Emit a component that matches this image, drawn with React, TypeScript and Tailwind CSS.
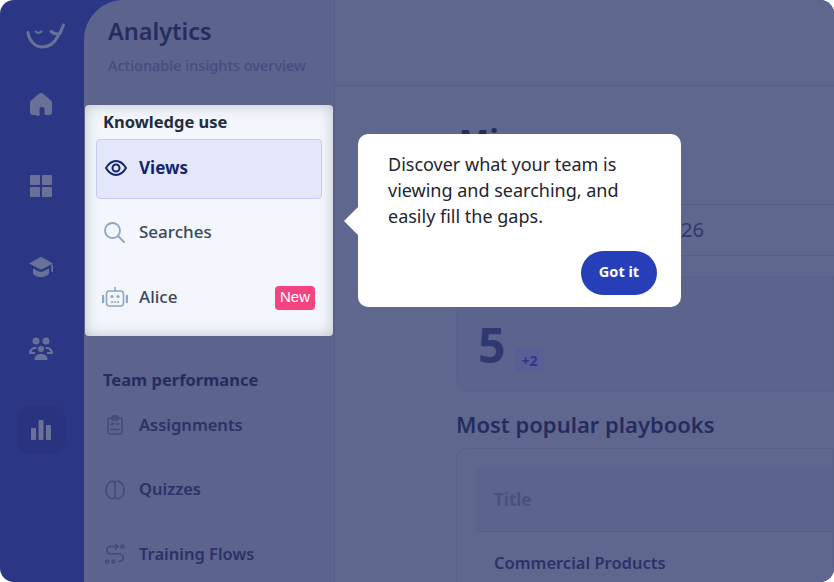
const font = { fontFamily: "'Noto Sans', sans-serif" };

const Logo = () => (
  <svg width="40" height="26" viewBox="0 0 40 26" fill="none" stroke="#6a7199" strokeWidth="3" strokeLinecap="round">
    <path d="M2 9.500c1 8 7 14.500 14 14.500 8 0 13-5 16-11 2-3 4-7 5.500-11" />
    <path d="M25 8.500c3 2.500 6 3.500 9.500 1.500" />
    <path d="M9.500 8.500c1 .5 2 1.500 3 1.500s2-1 3-1.500" strokeWidth="2" />
  </svg>
);

const HomeIcon = () => (
  <svg width="24" height="24" viewBox="0 0 24 24" fill="#6a7199">
    <path d="M10 1.800a3 3 0 0 1 4 0l8 6.700a3 3 0 0 1 1 2.300V20a3 3 0 0 1-3 3h-3a1.500 1.500 0 0 1-1.500-1.500V17a2 2 0 0 0-2-2h-1a2 2 0 0 0-2 2v4.500A1.500 1.500 0 0 1 7 23H4a3 3 0 0 1-3-3v-9.200a3 3 0 0 1 1-2.300Z" />
  </svg>
);

const GridIcon = () => (
  <svg width="24" height="24" viewBox="0 0 24 24" fill="#6a7199">
    <rect x="1" y="1" width="10" height="10" rx="1" />
    <rect x="13" y="1" width="10" height="10" rx="1" />
    <rect x="1" y="13" width="10" height="10" rx="1" />
    <rect x="13" y="13" width="10" height="10" rx="1" />
  </svg>
);

const CapIcon = () => (
  <svg width="26" height="22" viewBox="0 0 26 22" fill="#6a7199">
    <path d="M11.500 1.500a3 3 0 0 1 3 0L25 7.500 14.500 13a3 3 0 0 1-3 0L1 7.500Z" />
    <path d="M5 12.500 11 15.500a4.500 4.500 0 0 0 4 0l6-3V17c0 2-4 4-8 4s-8-2-8-4Z" />
    <rect x="23.300" y="8.500" width="1.700" height="7.500" rx="0.800" />
  </svg>
);

const TeamIcon = () => (
  <svg width="26" height="24" viewBox="0 0 26 24" fill="#6a7199">
    <circle cx="8" cy="4" r="3.500" />
    <circle cx="18" cy="4" r="3.500" />
    <circle cx="13" cy="12" r="3" />
    <path d="M6.500 23c0-4 2.500-6 6.500-6s6.500 2 6.500 6Z" />
    <path d="M1 15.500c0-3 3-5.500 6-5.500h1.500v2H7c-2 0-3 1-3.300 3H7v2H2a1 1 0 0 1-1-1.500Z" />
    <path d="M25 15.500c0-3-3-5.500-6-5.500h-1.500v2H19c2 0 3 1 3.300 3H19v2h5a1 1 0 0 0 1-1.500Z" />
  </svg>
);

const ChartIcon = () => (
  <svg width="20" height="22" viewBox="0 0 20 22" fill="#6a7199">
    <rect x="0" y="9" width="5" height="12" rx="1" />
    <rect x="7.500" y="1" width="5" height="20" rx="1" />
    <rect x="15" y="6" width="5" height="15" rx="1" />
  </svg>
);

const EyeIcon = () => (
  <svg width="24" height="24" viewBox="0 0 24 24" fill="none" stroke="#14246e" strokeWidth="2">
    <path d="M2 12c3-5 6-7 10-7s7 2 10 7c-3 5-6 7-10 7s-7-2-10-7Z" />
    <circle cx="12" cy="12" r="3.500" />
  </svg>
);

const SearchIcon = () => (
  <svg width="22" height="22" viewBox="0 0 22 22" fill="none" stroke="#8fa5c4" strokeWidth="1.800" strokeLinecap="round">
    <circle cx="9.500" cy="9.500" r="7.500" />
    <path d="m15 15 6 6" />
  </svg>
);

const BotIcon = () => (
  <svg width="26" height="22" viewBox="0 0 26 22" fill="none" stroke="#8fa5c4" strokeWidth="1.600" strokeLinecap="round">
    <rect x="4.500" y="5" width="17" height="15" rx="3" />
    <path d="M13 5V1.500" />
    <path d="M1 10v6M25 10v6" strokeWidth="2.400" />
    <circle cx="10" cy="10.500" r="0.800" fill="#8fa5c4" />
    <circle cx="16" cy="10.500" r="0.800" fill="#8fa5c4" />
    <path d="M9.500 16h1M12.500 16h1M15.500 16h1" />
  </svg>
);

const ClipboardIcon = () => (
  <svg width="16" height="20" viewBox="0 0 16 20" fill="none" stroke="#414a7d" strokeWidth="1.500" strokeLinecap="round">
    <rect x="1" y="3" width="14" height="16" rx="2" />
    <rect x="5" y="1" width="6" height="4" rx="1" />
    <path d="m4 9 1 1 1.500-2M9 9h3M4 14.500h8" />
  </svg>
);

const BrainIcon = () => (
  <svg width="20" height="20" viewBox="0 0 20 20" fill="none" stroke="#414a7d" strokeWidth="1.500">
    <path d="M10 2.500C8.500 1 6 .8 4.500 2.500 2 4 1 7 1 10s1 6 3.500 7.500C6 19.200 8.500 19 10 17.500c1.500 1.500 4 1.700 5.500 0C18 16 19 13 19 10s-1-6-3.500-7.500C14 .8 11.500 1 10 2.500Z" />
    <path d="M10 2.500v15" />
  </svg>
);

const FlowIcon = () => (
  <svg width="20" height="20" viewBox="0 0 20 20" fill="none" stroke="#414a7d" strokeWidth="1.500" strokeLinecap="round" strokeLinejoin="round">
    <path d="M13 2.500H5a3.800 3.800 0 0 0 0 7.500h10a3.800 3.800 0 0 1 0 7.500h-1" />
    <path d="m10.500 0 2.500 2.500L10.500 5" />
    <circle cx="17.500" cy="2.500" r="1.500" />
    <circle cx="2" cy="17.500" r="1.500" />
    <circle cx="8.500" cy="17.500" r="1.500" />
  </svg>
);

const railIcons = [<HomeIcon key="h" />, <GridIcon key="g" />, <CapIcon key="c" />, <TeamIcon key="t" />];

function NavRow({ icon, label }: { icon: React.ReactNode; label: string }) {
  return (
    <div className="h-[64.500px] flex items-center pl-[19px]">
      <span className="w-[24px] mr-[12px] flex justify-center">{icon}</span>
      <span className="text-[16.500px] font-semibold text-[#2a3366]">{label}</span>
    </div>
  );
}

export default function App() {
  return (
    <div style={font} className="w-[834px] h-[582px] bg-white">
      <div className="w-full h-full rounded-[14px] overflow-hidden flex bg-[#2b3785] relative">
        {/* icon rail */}
        <aside className="w-[84px] shrink-0 flex flex-col items-center pt-[23px]">
          <span className="ml-[8px] flex"><Logo /></span>
          <div className="mt-[43px] flex flex-col items-center gap-[57.500px]">
            {railIcons.map((icon) => (
              <div key={icon.key} className="h-[24px] flex items-center -ml-[2px]">
                {icon}
              </div>
            ))}
          </div>
          <div className="mt-[45px] w-[48px] h-[48px] rounded-[12px] bg-[#29337f] flex items-center justify-center -ml-[2px]">
            <ChartIcon />
          </div>
        </aside>

        <div className="flex-1 flex rounded-tl-[40px] overflow-hidden bg-[#60678f]">
          {/* secondary nav */}
          <aside className="w-[251px] shrink-0 bg-[#5c638c] border-r border-[#565d87] flex flex-col">
            <div className="h-[105px] shrink-0 pl-[24px] pt-[14px]">
              <h1 className="text-[23.500px] font-semibold text-[#252d5c] leading-[34px]">Analytics</h1>
              <p className="mt-[7px] text-[14.500px] font-medium text-[#454e7e]">Actionable insights overview</p>
            </div>
            <div className="relative z-10 shrink-0 ml-px w-[248px] h-[231px] rounded-[4px] bg-[#f3f6fc] shadow-[inset_0_0_14px_rgba(90,95,110,0.35)]">
              <h2 className="pl-[18px] pt-[6px] text-[16.500px] leading-[22px] font-bold text-[#232b3e]">Knowledge use</h2>
              <div className="mx-[11px] mt-[6px] h-[60px] rounded-[4px] bg-[#e4e7fb] border border-[#c4cbf3] flex items-center pl-[7px] pb-[2px]">
                <span className="w-[35px] flex"><EyeIcon /></span>
                <span className="text-[17px] font-bold text-[#14246e]">Views</span>
              </div>
              <div className="h-[66px] flex items-center pl-[18px]">
                <span className="w-[36px] flex"><SearchIcon /></span>
                <span className="text-[17px] font-medium text-[#3a465c]">Searches</span>
              </div>
              <div className="h-[64px] flex items-center pl-[17px] pr-[18px]">
                <span className="w-[37px] flex"><BotIcon /></span>
                <span className="text-[17px] font-medium text-[#3a465c]">Alice</span>
                <span className="ml-auto mt-[1px] h-[24px] px-[5px] rounded-[4px] bg-[#f4447f] text-white text-[15px] flex items-center" style={{ fontFamily: "Liberation Sans, sans-serif" }}>New</span>
              </div>
            </div>
            <h2 className="shrink-0 mt-[33px] pl-[19px] text-[16.500px] leading-[22px] font-bold text-[#252d5c]">Team performance</h2>
            <div className="shrink-0 mt-[2px]">
              <NavRow icon={<ClipboardIcon />} label="Assignments" />
              <NavRow icon={<BrainIcon />} label="Quizzes" />
              <NavRow icon={<FlowIcon />} label="Training Flows" />
            </div>
          </aside>

          {/* main content */}
          <main className="flex-1 min-w-0 overflow-hidden">
            <div className="h-[86px] border-b border-[#565d87]" />
            <div className="pl-[121px]">
              <h2 className="mt-[35px] pl-[3px] text-[32px] leading-[40px] font-bold text-[#252d5c]">Mi</h2>
              <div className="mt-[43px] h-[52px] border-y border-[#565d87] flex items-center pl-[225px] text-[20px] text-[#2f3870]">26</div>
              <div className="mt-[20px] h-[116px] rounded-l-[12px] border border-[#5a6189] bg-[#5c638c] flex items-start pt-[38px] pl-[21px]">
                <span className="text-[48px] leading-[60px] font-bold text-[#2f3870]">5</span>
                <span className="ml-[10px] mt-[33px] w-[28px] h-[24px] rounded-[4px] bg-[#595f94] text-[14px] font-bold text-[#2b3785] flex items-center justify-center">+2</span>
              </div>
              <h2 className="mt-[16px] text-[22px] leading-[32px] font-semibold text-[#252d5c]">Most popular playbooks</h2>
              <div className="mt-[8px] rounded-tl-[12px] border border-[#5a6189] pl-[19px] pt-[19px] h-[200px]">
                <div className="h-[64px] bg-[#5c638c] border-b border-[#565d87] flex items-center pl-[18px] text-[17px] font-bold text-[#48527f]">Title</div>
                <div className="h-[62px] flex items-center pl-[18px] text-[16.500px] font-semibold text-[#2a3366]">Commercial Products</div>
              </div>
            </div>
          </main>
        </div>

        {/* tooltip */}
        <div className="absolute z-20 left-[358px] top-[134px] w-[323px] h-[173px] rounded-[10px] bg-white pl-[30px] pr-[24px] pt-[17px] flex flex-col">
          <div className="absolute -left-[14px] top-[73px] w-0 h-0 border-y-[14px] border-y-transparent border-r-[14px] border-r-white" />
          <p className="text-[18px] leading-[26px] text-[#1f2430]">
            Discover what your team is<br />viewing and searching, and<br />easily fill the gaps.
          </p>
          <button className="mt-auto mb-[12px] self-end w-[76px] h-[44px] pb-[3px] rounded-full bg-[#263fb9] text-white text-[14.500px] font-bold">Got it</button>
        </div>
      </div>
    </div>
  );
}
